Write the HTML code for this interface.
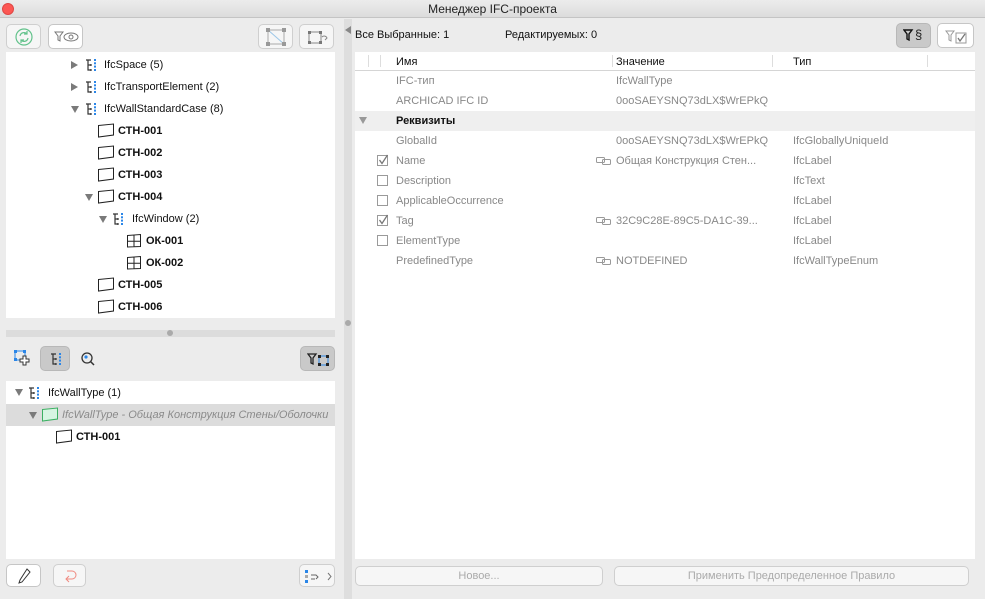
<!DOCTYPE html>
<html><head><meta charset="utf-8"><style>
*{margin:0;padding:0;box-sizing:border-box}
body{width:985px;height:599px;background:#ececec;font-family:"Liberation Sans","Noto Sans CJK SC",sans-serif;font-size:11px;color:#111;position:relative;overflow:hidden}
.a{position:absolute}
.btn{position:absolute;background:#f6f6f6;border:1px solid #cfcfcf;border-radius:5px}
.btn.w{background:#fff;border-color:#c6c6c6}
.btn.d{background:#c9c9c9;border-color:#b8b8b8}
.t{position:absolute;white-space:nowrap;line-height:14px}
.b{font-weight:bold}
.g{color:#888}
.tri{position:absolute;width:0;height:0}
.tr{border-top:4px solid transparent;border-bottom:4px solid transparent;border-left:7px solid #7a7a7a}
.td{border-left:4px solid transparent;border-right:4px solid transparent;border-top:7px solid #7a7a7a}
.cb{position:absolute;width:11px;height:11px;border:1px solid #9a9a9a;background:#fff}
</style></head><body>
<!-- title -->
<div class="a" style="left:0;top:0;width:985px;height:18px;background:linear-gradient(#ececec,#dcdcdc);border-bottom:1px solid #c4c4c4"></div>
<div class="a" style="left:2px;top:3px;width:12px;height:12px;border-radius:50%;background:#fc5753;border:1px solid #df4744"></div>
<div class="t" style="left:0;width:985px;text-align:center;top:2px;font-size:12px;color:#222">Менеджер IFC-проекта</div>

<!-- left toolbar -->
<div class="btn" style="left:6px;top:24px;width:35px;height:25px"><svg class="a" style="left:8px;top:3px" width="18" height="18"><circle cx="9" cy="9" r="8" fill="none" stroke="#62c28b" stroke-width="1.2"/><path d="M5 8a4 4 0 0 1 7-2M13 10a4 4 0 0 1-7 2M12 3v3h-3M6 15v-3h3" fill="none" stroke="#62c28b" stroke-width="1.2"/></svg></div>
<div class="btn w" style="left:48px;top:24px;width:35px;height:25px"><svg class="a" style="left:5px;top:5px" width="26" height="14"><path d="M1 2h8l-3 4v5l-2-1V6z" fill="none" stroke="#777"/><ellipse cx="17" cy="7" rx="7" ry="4" fill="none" stroke="#777"/><circle cx="17" cy="7" r="2" fill="none" stroke="#777"/></svg></div>
<div class="btn" style="left:258px;top:24px;width:35px;height:25px"><svg class="a" style="left:6px;top:2px" width="22" height="20"><rect x="3" y="3" width="16" height="14" fill="none" stroke="#aaa"/><path d="M3 3l16 14" stroke="#9cc7e8"/><rect x="1" y="1" width="4" height="4" fill="#999"/><rect x="17" y="1" width="4" height="4" fill="#999"/><rect x="1" y="15" width="4" height="4" fill="#999"/><rect x="17" y="15" width="4" height="4" fill="#999"/></svg></div>
<div class="btn" style="left:299px;top:24px;width:35px;height:25px"><svg class="a" style="left:7px;top:4px" width="22" height="18"><rect x="2" y="3" width="12" height="11" fill="none" stroke="#888"/><rect x="1" y="2" width="3" height="3" fill="#777"/><rect x="12" y="2" width="3" height="3" fill="#777"/><rect x="1" y="12" width="3" height="3" fill="#777"/><rect x="12" y="12" width="3" height="3" fill="#777"/><path d="M15 8a3 3 0 0 1 5 1l-2 2" fill="none" stroke="#888"/></svg></div>

<!-- upper tree -->
<div class="a" style="left:6px;top:52px;width:329px;height:266px;background:#fff"></div>
<svg width="0" height="0" style="position:absolute"><defs>
<symbol id="ty" viewBox="0 0 14 12"><path d="M1 1h5M3 1v10h3M3 6h3M6 5v2M6 10v2" fill="none" stroke="#333" stroke-width="1.2"/><rect x="9" y="0" width="2" height="2" fill="#2a86e8"/><rect x="9" y="3.3" width="2" height="2" fill="#2a86e8"/><rect x="9" y="6.6" width="2" height="2" fill="#2a86e8"/><rect x="9" y="10" width="2" height="2" fill="#2a86e8"/></symbol>
<symbol id="wl" viewBox="0 0 18 15"><path d="M1.5 2.5L16.5 1v11L1.5 14z" fill="#fff" stroke="#222"/></symbol>
<symbol id="wn" viewBox="0 0 16 15"><path d="M1.5 2.5L14.5 1.5v12L1.5 14zM8 2v12M1.5 8.2h13" fill="none" stroke="#222"/></symbol>
</defs></svg>
<div class="tri tr" style="left:71px;top:61px"></div><svg class="a" style="left:85px;top:59px" width="14" height="12"><use href="#ty"/></svg><div class="t" style="left:104px;top:58px">IfcSpace (5)</div>
<div class="tri tr" style="left:71px;top:83px"></div><svg class="a" style="left:85px;top:81px" width="14" height="12"><use href="#ty"/></svg><div class="t" style="left:104px;top:80px">IfcTransportElement (2)</div>
<div class="tri td" style="left:71px;top:106px"></div><svg class="a" style="left:85px;top:103px" width="14" height="12"><use href="#ty"/></svg><div class="t" style="left:104px;top:102px">IfcWallStandardCase (8)</div>
<svg class="a" style="left:97px;top:123px" width="18" height="15"><use href="#wl"/></svg><div class="t b" style="left:118px;top:124px">СТН-001</div>
<svg class="a" style="left:97px;top:145px" width="18" height="15"><use href="#wl"/></svg><div class="t b" style="left:118px;top:146px">СТН-002</div>
<svg class="a" style="left:97px;top:167px" width="18" height="15"><use href="#wl"/></svg><div class="t b" style="left:118px;top:168px">СТН-003</div>
<div class="tri td" style="left:85px;top:194px"></div><svg class="a" style="left:97px;top:189px" width="18" height="15"><use href="#wl"/></svg><div class="t b" style="left:118px;top:190px">СТН-004</div>
<div class="tri td" style="left:99px;top:216px"></div><svg class="a" style="left:112px;top:213px" width="14" height="12"><use href="#ty"/></svg><div class="t" style="left:132px;top:212px">IfcWindow (2)</div>
<svg class="a" style="left:126px;top:233px" width="16" height="15"><use href="#wn"/></svg><div class="t b" style="left:146px;top:234px">ОК-001</div>
<svg class="a" style="left:126px;top:255px" width="16" height="15"><use href="#wn"/></svg><div class="t b" style="left:146px;top:256px">ОК-002</div>
<svg class="a" style="left:97px;top:277px" width="18" height="15"><use href="#wl"/></svg><div class="t b" style="left:118px;top:278px">СТН-005</div>
<svg class="a" style="left:97px;top:299px" width="18" height="15"><use href="#wl"/></svg><div class="t b" style="left:118px;top:300px">СТН-006</div>

<!-- splitter -->
<div class="a" style="left:6px;top:330px;width:329px;height:7px;background:#dcdcdc"></div>
<div class="a" style="left:167px;top:330px;width:6px;height:6px;border-radius:50%;background:#aaa"></div>

<!-- second toolbar -->
<svg class="a" style="left:13px;top:349px" width="20" height="18"><rect x="2" y="2" width="10" height="9" fill="none" stroke="#2a86e8"/><rect x="1" y="1" width="3" height="3" fill="#2a86e8"/><rect x="10" y="1" width="3" height="3" fill="#2a86e8"/><rect x="1" y="9" width="3" height="3" fill="#2a86e8"/><path d="M10 7h3v3h3v3h-3v3h-3v-3H7v-3h3z" fill="#fff" stroke="#333"/></svg>
<div class="btn d" style="left:40px;top:346px;width:30px;height:25px"><svg class="a" style="left:9px;top:5px" width="14" height="14"><use href="#ty"/></svg></div>
<svg class="a" style="left:80px;top:351px" width="16" height="16"><circle cx="7" cy="7" r="5" fill="none" stroke="#333" stroke-width="1.3"/><circle cx="6" cy="6" r="1.6" fill="#2a86e8"/><path d="M10.5 10.5L14 14" stroke="#333" stroke-width="1.5"/></svg>
<div class="btn d" style="left:300px;top:346px;width:35px;height:25px"><svg class="a" style="left:6px;top:5px" width="24" height="16"><path d="M1 2h8l-3 4v6l-2-1V6z" fill="none" stroke="#222" stroke-width="1.3"/><rect x="12" y="4" width="9" height="9" fill="none" stroke="#2a86e8"/><rect x="11" y="3" width="3" height="3" fill="#222"/><rect x="19" y="3" width="3" height="3" fill="#222"/><rect x="11" y="11" width="3" height="3" fill="#222"/><rect x="19" y="11" width="3" height="3" fill="#222"/></svg></div>

<!-- lower tree -->
<div class="a" style="left:6px;top:381px;width:329px;height:178px;background:#fff"></div>
<div class="tri td" style="left:15px;top:389px"></div><svg class="a" style="left:28px;top:387px" width="14" height="12"><use href="#ty"/></svg><div class="t" style="left:48px;top:386px">IfcWallType (1)</div>
<div class="a" style="left:6px;top:404px;width:329px;height:22px;background:#dcdcdc"></div>
<div class="tri td" style="left:29px;top:412px"></div>
<svg class="a" style="left:41px;top:407px" width="18" height="15"><path d="M1.5 2.5L16.5 1v11L1.5 14z" fill="#d6f5e2" stroke="#3bb062"/></svg>
<div class="t g" style="left:62px;top:408px;font-style:italic;color:#8a8a8a">IfcWallType - Общая Конструкция Стены/Оболочки</div>
<svg class="a" style="left:55px;top:429px" width="18" height="15"><use href="#wl"/></svg><div class="t b" style="left:76px;top:430px">СТН-001</div>

<!-- bottom buttons left -->
<div class="btn w" style="left:6px;top:564px;width:35px;height:23px"><svg class="a" style="left:11px;top:3px" width="14" height="16"><path d="M9 1l3 3-8 10-3 1 1-3z" fill="none" stroke="#333"/></svg></div>
<div class="btn" style="left:53px;top:564px;width:33px;height:23px"><svg class="a" style="left:10px;top:4px" width="14" height="15"><path d="M3 2h5a4 4 0 0 1 0 8H2M5 7l-3 3 3 3" fill="none" stroke="#f08a80"/></svg></div>
<div class="btn" style="left:299px;top:564px;width:36px;height:23px"><svg class="a" style="left:4px;top:4px" width="28" height="15"><rect x="1" y="1" width="3" height="3" fill="#2a86e8"/><rect x="1" y="6" width="3" height="3" fill="#aaa"/><rect x="1" y="11" width="3" height="3" fill="#2a86e8"/><path d="M7 6h5l2 2-2 2M7 10h4" fill="none" stroke="#666"/><path d="M24 4l3 3.5-3 3.5" fill="none" stroke="#777"/></svg></div>

<!-- divider -->
<div class="a" style="left:344px;top:19px;width:8px;height:580px;background:#dedede"></div>
<div class="tri" style="left:345px;top:26px;border-top:4px solid transparent;border-bottom:4px solid transparent;border-right:6px solid #888"></div>
<div class="a" style="left:345px;top:320px;width:6px;height:6px;border-radius:50%;background:#aaa"></div>

<!-- right header -->
<div class="t" style="left:355px;top:28px">Все Выбранные: 1</div>
<div class="t" style="left:505px;top:28px">Редактируемых: 0</div>
<div class="btn d" style="left:896px;top:23px;width:35px;height:25px"><svg class="a" style="left:6px;top:4px" width="24" height="16"><path d="M1 2h8l-3 4v6l-2-1V6z" fill="none" stroke="#111" stroke-width="1.4"/></svg><div class="t" style="left:18px;top:4px;font-size:13px;color:#222">§</div></div>
<div class="btn w" style="left:937px;top:23px;width:37px;height:25px"><svg class="a" style="left:7px;top:5px" width="24" height="16"><path d="M1 2h8l-3 4v6l-2-1V6z" fill="none" stroke="#999"/><rect x="11" y="4" width="10" height="10" fill="none" stroke="#999"/><path d="M13 9l2 3 5-7" fill="none" stroke="#777" stroke-width="1.3"/></svg></div>

<!-- table -->
<div class="a" style="left:355px;top:52px;width:620px;height:507px;background:#fff"></div>
<div class="a" style="left:355px;top:70px;width:620px;height:1px;background:#d5d5d5"></div>
<div class="a" style="left:368px;top:55px;width:1px;height:12px;background:#ddd"></div>
<div class="a" style="left:380px;top:55px;width:1px;height:12px;background:#ddd"></div>
<div class="a" style="left:612px;top:55px;width:1px;height:12px;background:#ddd"></div>
<div class="a" style="left:772px;top:55px;width:1px;height:12px;background:#ddd"></div>
<div class="a" style="left:927px;top:55px;width:1px;height:12px;background:#ddd"></div>
<div class="t" style="left:396px;top:55px">Имя</div>
<div class="t" style="left:616px;top:55px">Значение</div>
<div class="t" style="left:793px;top:55px">Тип</div>

<div class="t g" style="left:396px;top:74px">IFC-тип</div><div class="t g" style="left:616px;top:74px">IfcWallType</div>
<div class="t g" style="left:396px;top:94px">ARCHICAD IFC ID</div><div class="t g" style="left:616px;top:94px">0ooSAEYSNQ73dLX$WrEPkQ</div>
<div class="a" style="left:355px;top:111px;width:620px;height:20px;background:#efefef"></div>
<div class="tri" style="left:359px;top:117px;border-left:4px solid transparent;border-right:4px solid transparent;border-top:7px solid #999"></div>
<div class="t b" style="left:396px;top:114px">Реквизиты</div>
<div class="t g" style="left:396px;top:134px">GlobalId</div><div class="t g" style="left:616px;top:134px">0ooSAEYSNQ73dLX$WrEPkQ</div><div class="t g" style="left:793px;top:134px">IfcGloballyUniqueId</div>

<svg width="0" height="0" style="position:absolute"><defs><symbol id="lk" viewBox="0 0 16 8"><rect x="0.5" y="0.5" width="8" height="5" rx="1" fill="none" stroke="#999"/><rect x="6.5" y="2.5" width="8" height="5" rx="1" fill="none" stroke="#999"/></symbol>
<symbol id="ck" viewBox="0 0 12 12"><path d="M2.5 6l2.5 3.5L10.5 1" fill="none" stroke="#777" stroke-width="1.3"/></symbol></defs></svg>

<div class="cb" style="left:377px;top:155px"></div><svg class="a" style="left:377px;top:154px" width="12" height="12"><use href="#ck"/></svg>
<div class="t g" style="left:396px;top:154px">Name</div><svg class="a" style="left:596px;top:157px" width="16" height="8"><use href="#lk"/></svg><div class="t g" style="left:616px;top:154px">Общая Конструкция Стен...</div><div class="t g" style="left:793px;top:154px">IfcLabel</div>
<div class="cb" style="left:377px;top:175px"></div><div class="t g" style="left:396px;top:174px">Description</div><div class="t g" style="left:793px;top:174px">IfcText</div>
<div class="cb" style="left:377px;top:195px"></div><div class="t g" style="left:396px;top:194px">ApplicableOccurrence</div><div class="t g" style="left:793px;top:194px">IfcLabel</div>
<div class="cb" style="left:377px;top:215px"></div><svg class="a" style="left:377px;top:214px" width="12" height="12"><use href="#ck"/></svg>
<div class="t g" style="left:396px;top:214px">Tag</div><svg class="a" style="left:596px;top:217px" width="16" height="8"><use href="#lk"/></svg><div class="t g" style="left:616px;top:214px">32C9C28E-89C5-DA1C-39...</div><div class="t g" style="left:793px;top:214px">IfcLabel</div>
<div class="cb" style="left:377px;top:235px"></div><div class="t g" style="left:396px;top:234px">ElementType</div><div class="t g" style="left:793px;top:234px">IfcLabel</div>
<div class="t g" style="left:396px;top:254px">PredefinedType</div><svg class="a" style="left:596px;top:257px" width="16" height="8"><use href="#lk"/></svg><div class="t g" style="left:616px;top:254px">NOTDEFINED</div><div class="t g" style="left:793px;top:254px">IfcWallTypeEnum</div>

<!-- right bottom buttons -->
<div class="btn" style="left:355px;top:566px;width:248px;height:20px"><div class="t" style="left:0;width:246px;text-align:center;top:2px;color:#aaa">Новое...</div></div>
<div class="btn" style="left:614px;top:566px;width:355px;height:20px"><div class="t" style="left:0;width:353px;text-align:center;top:2px;color:#aaa">Применить Предопределенное Правило</div></div>
</body></html>
